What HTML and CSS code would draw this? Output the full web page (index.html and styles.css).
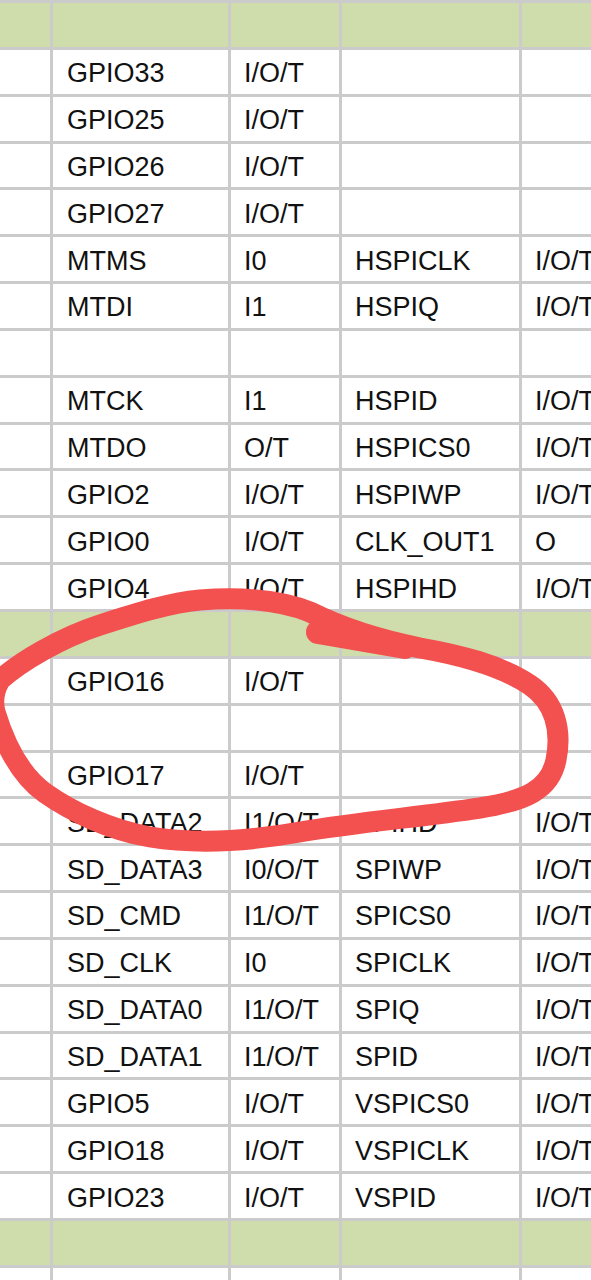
FILE: index.html
```html
<!DOCTYPE html>
<html>
<head>
<meta charset="utf-8">
<link rel="stylesheet" href="styles.css">
</head>
<body>
<div class="sheet">
  <div class="row green"><div></div><div></div><div></div><div></div><div></div></div>
  <div class="row"><div></div><div>GPIO33</div><div>I/O/T</div><div></div><div></div></div>
  <div class="row"><div></div><div>GPIO25</div><div>I/O/T</div><div></div><div></div></div>
  <div class="row"><div></div><div>GPIO26</div><div>I/O/T</div><div></div><div></div></div>
  <div class="row"><div></div><div>GPIO27</div><div>I/O/T</div><div></div><div></div></div>
  <div class="row"><div></div><div>MTMS</div><div>I0</div><div>HSPICLK</div><div>I/O/T</div></div>
  <div class="row"><div></div><div>MTDI</div><div>I1</div><div>HSPIQ</div><div>I/O/T</div></div>
  <div class="row"><div></div><div></div><div></div><div></div><div></div></div>
  <div class="row"><div></div><div>MTCK</div><div>I1</div><div>HSPID</div><div>I/O/T</div></div>
  <div class="row"><div></div><div>MTDO</div><div>O/T</div><div>HSPICS0</div><div>I/O/T</div></div>
  <div class="row"><div></div><div>GPIO2</div><div>I/O/T</div><div>HSPIWP</div><div>I/O/T</div></div>
  <div class="row"><div></div><div>GPIO0</div><div>I/O/T</div><div>CLK_OUT1</div><div>O</div></div>
  <div class="row"><div></div><div>GPIO4</div><div>I/O/T</div><div>HSPIHD</div><div>I/O/T</div></div>
  <div class="row green"><div></div><div></div><div></div><div></div><div></div></div>
  <div class="row"><div></div><div>GPIO16</div><div>I/O/T</div><div></div><div></div></div>
  <div class="row"><div></div><div></div><div></div><div></div><div></div></div>
  <div class="row"><div></div><div>GPIO17</div><div>I/O/T</div><div></div><div></div></div>
  <div class="row"><div></div><div>SD_DATA2</div><div>I1/O/T</div><div>SPIHD</div><div>I/O/T</div></div>
  <div class="row"><div></div><div>SD_DATA3</div><div>I0/O/T</div><div>SPIWP</div><div>I/O/T</div></div>
  <div class="row"><div></div><div>SD_CMD</div><div>I1/O/T</div><div>SPICS0</div><div>I/O/T</div></div>
  <div class="row"><div></div><div>SD_CLK</div><div>I0</div><div>SPICLK</div><div>I/O/T</div></div>
  <div class="row"><div></div><div>SD_DATA0</div><div>I1/O/T</div><div>SPIQ</div><div>I/O/T</div></div>
  <div class="row"><div></div><div>SD_DATA1</div><div>I1/O/T</div><div>SPID</div><div>I/O/T</div></div>
  <div class="row"><div></div><div>GPIO5</div><div>I/O/T</div><div>VSPICS0</div><div>I/O/T</div></div>
  <div class="row"><div></div><div>GPIO18</div><div>I/O/T</div><div>VSPICLK</div><div>I/O/T</div></div>
  <div class="row"><div></div><div>GPIO23</div><div>I/O/T</div><div>VSPID</div><div>I/O/T</div></div>
  <div class="row green"><div></div><div></div><div></div><div></div><div></div></div>
  <div class="row"><div></div><div></div><div></div><div></div><div></div></div>
</div>
<svg class="scribble" width="591" height="1280" viewBox="0 0 591 1280">
  <path d="M 0 680 C 20 662, 60 638, 100 625 C 140 612, 170 603, 200 600 C 240 597, 280 600, 310 612 C 340 627, 380 640, 420 648 C 460 655, 500 665, 530 685 C 555 702, 562 730, 556 760 C 550 790, 525 801, 480 808 C 420 817, 360 822, 300 832 C 250 841, 200 845, 150 837 C 110 830, 72 812, 45 793 C 20 775, 5 745, -5 712 C -8 700, -6 690, 0 680" />
  <path d="M 318 632 L 405 647" class="blob" />
</svg>
</body>
</html>
```
FILE: styles.css
```css
html, body {
  margin: 0;
  padding: 0;
  background: #ffffff;
}
body {
  width: 591px;
  height: 1280px;
  overflow: hidden;
  position: relative;
}
.sheet {
  display: flex;
  flex-direction: column;
  gap: 3px;
  padding-top: 3px;
  background: #cbcbcb;
  width: max-content;
}
.row {
  display: grid;
  grid-template-columns: 50px 175px 108px 177px 200px;
  column-gap: 3px;
  height: 43.85px;
}
.row > div {
  background: #ffffff;
  display: flex;
  align-items: center;
  padding: 4px 0 0 14px;
  box-sizing: border-box;
  font-family: "Liberation Sans", Arial, sans-serif;
  font-size: 27px;
  color: #111111;
  white-space: nowrap;
  overflow: hidden;
}
.row > div:nth-child(3),
.row > div:nth-child(4),
.row > div:nth-child(5) {
  padding-left: 13px;
}
.row.green > div {
  background: #cfdcab;
}
.scribble {
  position: absolute;
  left: 0;
  top: 0;
  pointer-events: none;
}
.scribble path {
  fill: none;
  stroke: #f2514f;
  stroke-width: 21;
  stroke-linecap: round;
  stroke-linejoin: round;
}
.scribble path.blob {
  stroke-width: 24;
}
```
